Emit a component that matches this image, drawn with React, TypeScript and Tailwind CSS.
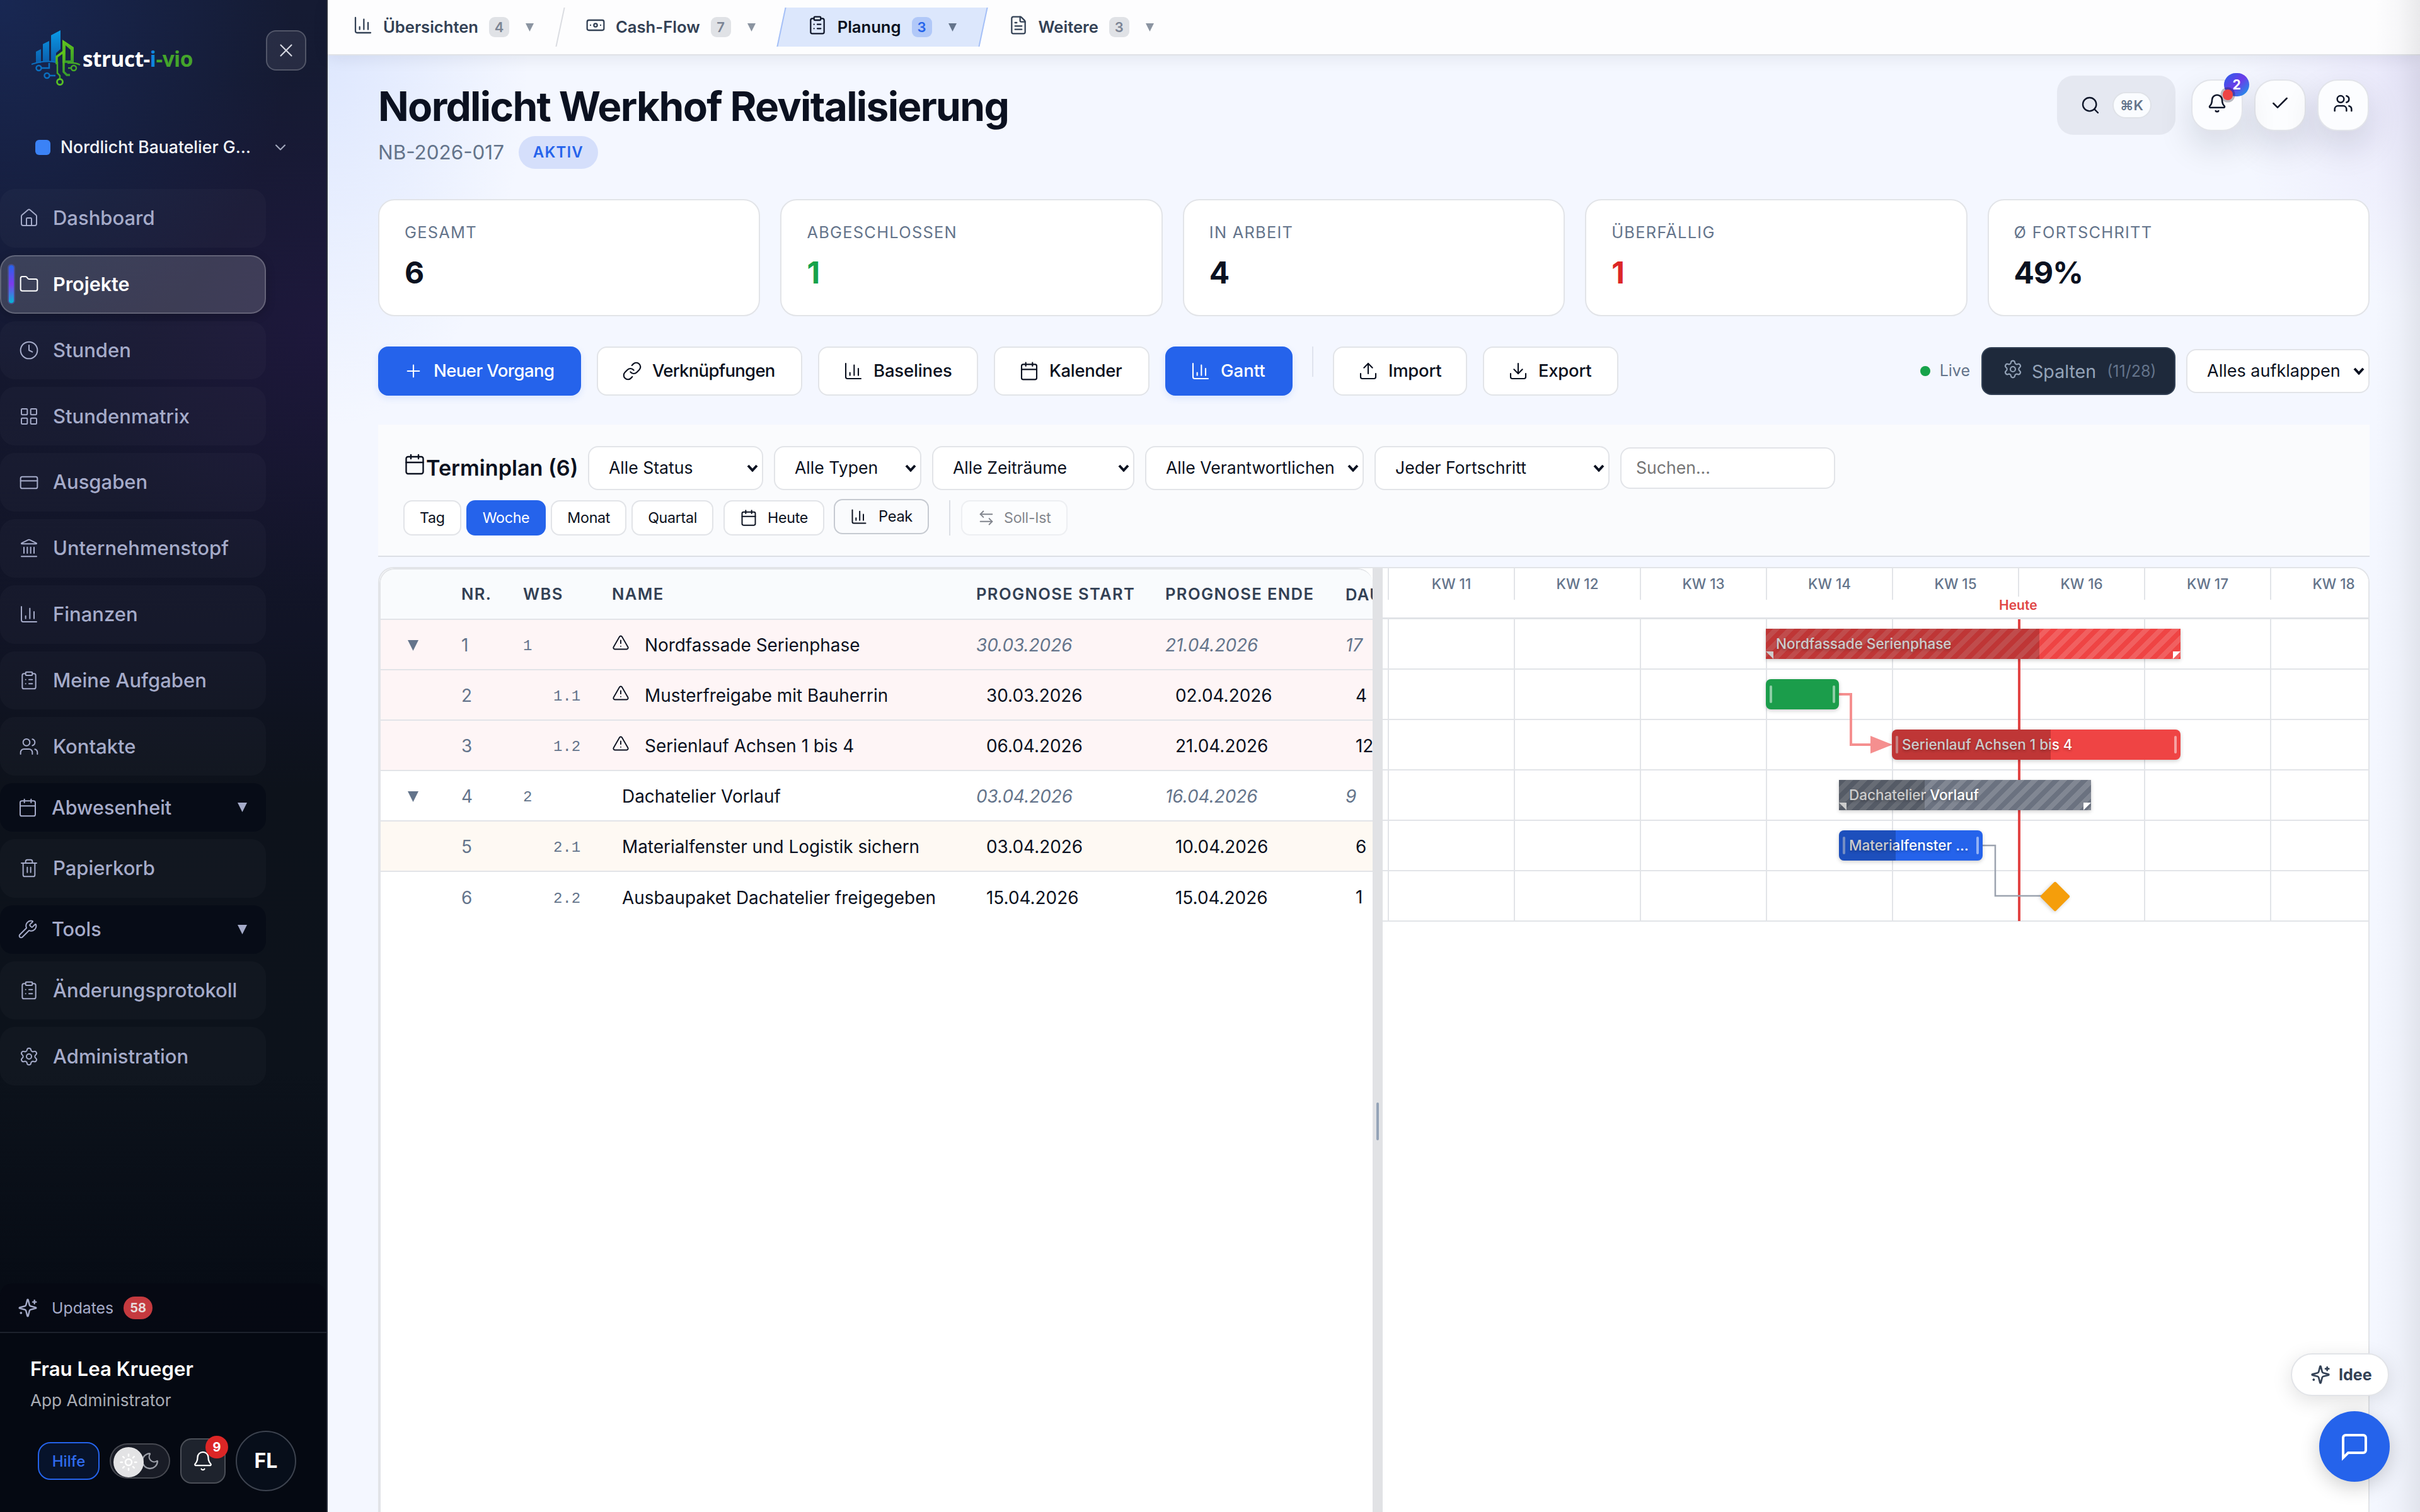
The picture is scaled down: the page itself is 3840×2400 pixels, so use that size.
import React from "react";
import {
  ArrowLeftRight,
  Banknote,
  Bell,
  Calendar,
  ChartColumn,
  Check,
  ChevronDown,
  ClipboardList,
  Clock,
  CreditCard,
  Download,
  FileText,
  Folder,
  House,
  Landmark,
  LayoutGrid,
  Link,
  Moon,
  Plus,
  Search,
  Settings,
  Sun,
  Trash2,
  TriangleAlert,
  Upload,
  Users,
  Wrench,
  X,
} from "lucide-react";

type IconType = React.ComponentType<{ size?: number; strokeWidth?: number; className?: string }>;

const NAV: { label: string; icon: IconType; active?: boolean; group?: boolean }[] = [
  { label: "Dashboard", icon: House },
  { label: "Projekte", icon: Folder, active: true },
  { label: "Stunden", icon: Clock },
  { label: "Stundenmatrix", icon: LayoutGrid },
  { label: "Ausgaben", icon: CreditCard },
  { label: "Unternehmenstopf", icon: Landmark },
  { label: "Finanzen", icon: ChartColumn },
  { label: "Meine Aufgaben", icon: ClipboardList },
  { label: "Kontakte", icon: Users },
  { label: "Abwesenheit", icon: Calendar, group: true },
  { label: "Papierkorb", icon: Trash2 },
  { label: "Tools", icon: Wrench, group: true },
  { label: "Änderungsprotokoll", icon: ClipboardList },
  { label: "Administration", icon: Settings },
];

const STATS = [
  { label: "GESAMT", value: "6", color: "text-[#0b1120]" },
  { label: "ABGESCHLOSSEN", value: "1", color: "text-[#16a34a]" },
  { label: "IN ARBEIT", value: "4", color: "text-[#0b1120]" },
  { label: "ÜBERFÄLLIG", value: "1", color: "text-[#dc2626]" },
  { label: "Ø FORTSCHRITT", value: "49%", color: "text-[#0b1120]" },
];

const ROWS = [
  { nr: 1, wbs: "1", name: "Nordfassade Serienphase", start: "30.03.2026", end: "21.04.2026", days: "17", parent: true, warn: true, bg: "bg-[#fef5f6]" },
  { nr: 2, wbs: "1.1", name: "Musterfreigabe mit Bauherrin", start: "30.03.2026", end: "02.04.2026", days: "4", warn: true, bg: "bg-[#fef5f6]" },
  { nr: 3, wbs: "1.2", name: "Serienlauf Achsen 1 bis 4", start: "06.04.2026", end: "21.04.2026", days: "12", warn: true, bg: "bg-[#fef5f6]" },
  { nr: 4, wbs: "2", name: "Dachatelier Vorlauf", start: "03.04.2026", end: "16.04.2026", days: "9", parent: true, bg: "bg-white" },
  { nr: 5, wbs: "2.1", name: "Materialfenster und Logistik sichern", start: "03.04.2026", end: "10.04.2026", days: "6", bg: "bg-[#fef9f3]" },
  { nr: 6, wbs: "2.2", name: "Ausbaupaket Dachatelier freigegeben", start: "15.04.2026", end: "15.04.2026", days: "1", bg: "bg-white" },
];

const WEEKS = ["KW 11", "KW 12", "KW 13", "KW 14", "KW 15", "KW 16", "KW 17", "KW 18"];

const Sparkle: React.FC<{ size: number; strokeWidth: number; className?: string }> = ({ size, strokeWidth, className }) => (
  <svg width={size} height={size} viewBox="0 0 24 24" fill="none" stroke="currentColor" strokeWidth={strokeWidth} strokeLinecap="round" strokeLinejoin="round" className={className}>
    <path d="M9.94 15.5A2 2 0 0 0 8.5 14.06l-6.14-1.58a.5.5 0 0 1 0-.96L8.5 9.94A2 2 0 0 0 9.94 8.5l1.58-6.14a.5.5 0 0 1 .96 0l1.58 6.14a2 2 0 0 0 1.44 1.44l6.14 1.58a.5.5 0 0 1 0 .96l-6.14 1.58a2 2 0 0 0-1.44 1.44l-1.58 6.14a.5.5 0 0 1-.96 0z" />
    <path d="M20 3v4M22 5h-4M4 17.5v1M4.5 18h-1" />
  </svg>
);

const Caret: React.FC<{ className?: string }> = ({ className }) => (
  <svg viewBox="0 0 14 14" className={className}>
    <path d="M0 0H14L7 14Z" fill="currentColor" />
  </svg>
);

const Logo: React.FC = () => (
  <svg width="78" height="90" viewBox="0 0 78 90" fill="none">
    <defs>
      <linearGradient id="lb" x1="0" y1="0" x2="0" y2="1">
        <stop offset="0" stopColor="#0a9be8" />
        <stop offset="1" stopColor="#0b5cab" />
      </linearGradient>
      <linearGradient id="lg" x1="0" y1="0" x2="0" y2="1">
        <stop offset="0" stopColor="#62c51c" />
        <stop offset="1" stopColor="#379a2c" />
      </linearGradient>
    </defs>
    <path d="M7 34l8-4v22H7zM18 22l10-5v33H18zM31 8l15-8v30l-7 6v14h-8z" fill="url(#lb)" />
    <path d="M0 54q22-7 39-3" stroke="#0b6fc0" strokeWidth="2" />
    <circle cx="11.500" cy="60" r="4" stroke="#0b6fc0" strokeWidth="2.500" />
    <circle cx="24.500" cy="72" r="4" stroke="#0b6fc0" strokeWidth="2.500" />
    <path d="M16 60h12V52M29 72h9" stroke="#0b6fc0" strokeWidth="2.500" />
    <path d="M49 15l18 12v25H49zM54 24v24h8V31z" fill="url(#lg)" fillRule="evenodd" />
    <path d="M40 54V42l11-8v32l5 5h5" stroke="url(#lg)" strokeWidth="3.500" />
    <path d="M41 50v18l4 4v6M57 52q12-1 20 3M58 60h4" stroke="#45a828" strokeWidth="2.500" />
    <circle cx="45" cy="82" r="4.500" stroke="#58c025" strokeWidth="2.800" />
    <circle cx="67" cy="60" r="4" stroke="#45a828" strokeWidth="2.500" />
  </svg>
);

const Sidebar: React.FC = () => (
  <aside className="relative flex h-[2400px] w-[520px] shrink-0 flex-col border-r-2 border-[#2a2f3b] bg-[radial-gradient(ellipse_620px_800px_at_0%_0%,rgba(29,58,130,0.4),transparent_75%),radial-gradient(ellipse_560px_560px_at_100%_22%,rgba(60,24,100,0.22),transparent_75%),linear-gradient(180deg,#151b33_0px,#151830_500px,#111426_1000px,#0d121b_1250px,#0c121b_1700px,#070c15_2040px,#050912_2400px)]">
    {/* HEADER */}
    <div className="mt-[48px] flex h-[64px] items-start pl-[50px] pr-[32px]">
      <div className="flex items-start gap-[3px]">
        <Logo />
        <div className="mt-[23px] font-['Open_Sans','Noto_Sans',sans-serif] text-[33.300px] font-bold leading-[44px] tracking-[-0.5px] text-white">
          struct-<span className="text-[#0f86dd]">i</span>
          <span className="text-[#44a52b]">-vio</span>
        </div>
      </div>
      <div className="ml-auto flex h-[64px] w-[64px] items-center justify-center rounded-[16px] border-2 border-white/20 bg-white/8 text-[#d6d9e2]">
        <X size={34} strokeWidth={1.5} />
      </div>
    </div>

    {/* WORKSPACE */}
    <div className="mt-[90px] flex h-[64px] items-center pl-[56px] pr-[59px] text-[#f3f5fa]">
      <span className="h-[24px] w-[24px] rounded-[6px] bg-[#3b82f6]" />
      <span className="ml-[16px] text-[26.600px] font-medium">Nordlicht Bauatelier G…</span>
      <ChevronDown size={28} strokeWidth={1.8} className="ml-auto text-[#a5abc0]" />
    </div>

    {/* NAV */}
    <nav className="mt-[34px] flex w-[422px] flex-col gap-[12px] text-[31px] font-medium text-[#a5abc9]">
      {NAV.map(({ label, icon: Icon, active, group }) =>
        group ? (
          <div key={label} className="flex h-[76.8px] items-center rounded-[20px] bg-[#060b17]/80 pl-[28px] pr-[30px]">
            <Icon size={32} strokeWidth={1.5} />
            <span className="ml-[22px] text-[30.600px]">{label}</span>
            <Caret className="ml-auto h-[15px] w-[15px]" />
          </div>
        ) : active ? (
          <div key={label} className="relative flex h-[92.8px] items-center rounded-[24px] border-2 border-white/20 bg-white/16 pl-[28px] text-white shadow-[0_4px_16px_rgba(0,0,0,0.2)]">
            <span className="absolute left-[12px] top-[14px] h-[60px] w-[8px] rounded-full bg-[linear-gradient(180deg,#2563eb,#7c3aed_50%,#06b6d4)] shadow-[0_0_0_2px_rgba(99,102,241,0.35)]" />
            <Icon size={32} strokeWidth={1.5} />
            <span className="ml-[22px] text-[30.500px] font-semibold">{label}</span>
          </div>
        ) : (
          <div key={label} className="flex h-[92.8px] items-center rounded-[24px] bg-white/[0.022] pl-[30px]">
            <Icon size={32} strokeWidth={1.5} />
            <span className="ml-[22px]">{label}</span>
          </div>
        )
      )}
    </nav>

    {/* FOOTER */}
    <div className="mt-auto flex h-[77px] items-center rounded-t-[20px] bg-[#060913]/70 pl-[28px] text-[24.800px] text-[#a5abc9]">
      <Sparkle size={32} strokeWidth={1.8} />
      <span className="ml-[22px] pt-[3px]">Updates</span>
      <span className="ml-[16px] flex h-[36px] w-[46px] items-center justify-center rounded-full bg-[#c53a3f] text-[20px] font-bold text-[#e8dada]">58</span>
    </div>
    <div className="h-[286px] border-t-2 border-[#1d222d] bg-[#050912] pl-[48px]">
      <div className="mt-[37px] text-[31.200px] font-semibold leading-[40px] text-white">Frau Lea Krueger</div>
      <div className="mt-[14px] text-[26.200px] leading-[32px] text-[#a9adb5]">App Administrator</div>
      <div className="mt-[32px] flex h-[96px] items-center pl-[12px]">
        <div className="flex h-[60px] w-[98px] items-center justify-center rounded-[20px] border-2 border-[#2563eb] bg-[#07132b] pt-[2px] text-[24px] font-medium text-[#2f6bee]">Hilfe</div>
        <div className="relative ml-[16px] flex h-[56px] w-[96px] items-center justify-end rounded-full border-2 border-white/20 bg-[#191c26] pr-[14px] text-[#9a9da6]">
          <span className="absolute left-[4px] top-[4px] flex h-[48px] w-[48px] items-center justify-center rounded-full bg-[#e3e3e5] text-white">
            <Sun size={30} strokeWidth={2} />
          </span>
          <Moon size={32} strokeWidth={1.7} />
        </div>
        <div className="relative ml-[16px] flex h-[72px] w-[72px] items-center justify-center rounded-[18px] border-2 border-white/20 bg-[#1e232d] text-white">
          <Bell size={34} strokeWidth={1.6} />
          <span className="absolute right-[-6px] top-[-6px] flex h-[36px] w-[36px] items-center justify-center rounded-full bg-[#dc2626] text-[20px] font-bold">9</span>
        </div>
        <div className="ml-[16px] flex h-[96px] w-[96px] items-center justify-center rounded-full border-2 border-[#3d434f] bg-[#070e1a] text-[32px] font-bold text-white">FL</div>
      </div>
    </div>
  </aside>
);

const Tab: React.FC<{ icon: IconType; label: string; count: number; active?: boolean; className?: string }> = ({ icon: Icon, label, count, active, className }) => (
  <div className={`relative flex h-[62px] items-center text-[25.600px] font-semibold text-[#334155] ${className}`}>
    {active && <span className="absolute inset-y-0 left-[-42px] right-[-43px] -skew-x-12 border-x-2 border-[#a5c0f7] bg-[#dce7fc]" />}
    <Icon size={32} strokeWidth={1.7} className={active ? "relative mb-[6px] text-[#0f172a]" : "relative mb-[6px]"} />
    <span className={active ? "relative ml-[16px] text-[#0b1120]" : "relative ml-[16px]"}>{label}</span>
    <span className={active ? "relative ml-[17px] flex h-[32px] w-[32px] items-center justify-center rounded-[9px] bg-[#b1c8f8] text-[22px] text-[#2563eb]" : "relative ml-[17px] flex h-[32px] w-[32px] items-center justify-center rounded-[9px] bg-[#e0e2e6] text-[22px] text-[#7b8494]"}>{count}</span>
    <Caret className={active ? "relative ml-[26px] h-[13px] w-[13px] text-[#64748b]" : "relative ml-[26px] h-[13px] w-[13px] text-[#8b94a1]"} />
  </div>
);

const TopBar: React.FC = () => (
  <div className="relative flex h-[88px] w-full items-start border-b-2 border-[#e0e2e7] bg-[#fdfdfe] pl-[40px] pt-[12px] shadow-[0_4px_24px_rgba(15,23,42,0.08)]">
    <Tab icon={ChartColumn} label="Übersichten" count={4} className="w-[290px]" />
    <span className="ml-[38px] h-[62px] w-[2px] -skew-x-12 bg-[#dadce1]" />
    <Tab icon={Banknote} label="Cash-Flow" count={7} className="ml-[39px]" />
    <Tab icon={ClipboardList} label="Planung" count={3} active className="ml-[82px]" />
    <Tab icon={FileText} label="Weitere" count={3} className="ml-[82px]" />
  </div>
);

const PageHeader: React.FC = () => (
  <div className="flex justify-between">
    <div>
      <h1 className="text-[64px] font-bold leading-[76px] tracking-[-0.0264em] text-[#0b1120]">Nordlicht Werkhof Revitalisierung</h1>
      <div className="mt-[9px] flex h-[52px] items-center">
        <span className="pt-[2px] text-[31.400px] text-[#64748b]">NB-2026-017</span>
        <span className="ml-[23px] flex h-[52px] w-[126px] items-center justify-center rounded-full bg-[#d5dffb] text-[24px] font-semibold tracking-[0.05em] text-[#2563eb]">AKTIV</span>
      </div>
    </div>
    <div className="flex items-start">
      <div className="mr-[25px] mt-[-11px] flex h-[94px] w-[188px] items-center justify-center gap-[19px] rounded-[26px] bg-[#e5e8f1] pr-[2px] text-[#0f172a]">
        <Search size={32} strokeWidth={1.8} />
        <span className="flex h-[42px] w-[62px] items-center justify-center rounded-full border-2 border-[#dfe2e8] bg-[#fafcff] text-[22px] font-semibold text-[#64748b]">⌘K</span>
      </div>
      <div className="mr-[1px] mt-[-5px] flex gap-[18px] text-[#0f172a]">
        <div className="relative flex h-[82px] w-[82px] items-center justify-center rounded-[32px] border-2 border-[#e2e4ea] bg-[#fcfdff] pb-[6px] shadow-[0_24px_56px_rgba(15,23,42,0.14)]">
          <Bell size={32} strokeWidth={1.9} />
          <span className="absolute right-[-12px] top-[-12px] flex h-[37px] w-[40px] items-center justify-center rounded-full bg-[linear-gradient(135deg,#2563eb,#6d3be8_50%,#0ea5e9)] text-[21px] font-bold text-white">2</span>
          <span className="absolute left-[48px] top-[14px] h-[17px] w-[16px] rounded-full bg-[#ef4444] shadow-[0_0_0_3.500px_rgba(15,15,30,0.28)]" />
        </div>
        <div className="flex h-[82px] w-[82px] items-center justify-center rounded-[32px] border-2 border-[#e2e4ea] bg-[#fcfdff] pb-[6px] shadow-[0_24px_56px_rgba(15,23,42,0.14)]">
          <Check size={32} strokeWidth={1.9} />
        </div>
        <div className="flex h-[82px] w-[82px] items-center justify-center rounded-[32px] border-2 border-[#e2e4ea] bg-[#fcfdff] pb-[6px] shadow-[0_24px_56px_rgba(15,23,42,0.14)]">
          <Users size={32} strokeWidth={1.9} />
        </div>
      </div>
    </div>
  </div>
);

const ActionButton: React.FC<{ icon: IconType; label: string; className: string; primary?: boolean }> = ({ icon: Icon, label, className, primary }) => (
  <div
    className={`flex h-[78px] items-center gap-[16px] whitespace-nowrap rounded-[16px] border-2 pl-[38px] font-medium ${className} ${
      primary ? "border-[#2563eb] bg-[#2563eb] text-white shadow-[0_4px_12px_rgba(37,99,235,0.12)]" : "border-[#e2e4e8] bg-white text-[#0b1120]"
    }`}
  >
    <Icon size={32} strokeWidth={1.6} className="shrink-0" />
    <span>{label}</span>
  </div>
);

const SelectArrow: React.FC = () => (
  <svg width="18" height="12" viewBox="0 0 18 12" fill="none" className="ml-auto shrink-0">
    <path d="M2 2l7 7.500L16 2" stroke="#0b1120" strokeWidth="4" />
  </svg>
);

const Select: React.FC<{ label: string; className: string }> = ({ label, className }) => (
  <div className={`flex h-[70px] items-center whitespace-nowrap rounded-[16px] border-2 border-[#e2e4e8] bg-white pl-[31px] pr-[6px] text-[#0b1120] ${className}`}>
    <span>{label}</span>
    <SelectArrow />
  </div>
);

const Toolbar: React.FC = () => (
  <div className="mt-[48px] flex h-[78px] items-center gap-[25px] text-[27.500px]">
    <ActionButton icon={Plus} label="Neuer Vorgang" className="w-[322px] tracking-[-0.02em]" primary />
    <ActionButton icon={Link} label="Verknüpfungen" className="w-[326px] tracking-[-0.026em]" />
    <ActionButton icon={ChartColumn} label="Baselines" className="w-[254px] tracking-[-0.006em]" />
    <ActionButton icon={Calendar} label="Kalender" className="w-[247px] tracking-[-0.012em]" />
    <ActionButton icon={ChartColumn} label="Gantt" className="w-[202px]" primary />
    <span className="mx-[6px] h-[48px] w-[2px] self-start bg-[#dfe3ee]" />
    <ActionButton icon={Upload} label="Import" className="w-[213px] tracking-[-0.01em]" />
    <ActionButton icon={Download} label="Export" className="w-[215px] tracking-[-0.01em]" />
    <div className="ml-auto flex items-center">
      <span className="h-[16px] w-[16px] rounded-full bg-[#16a34a]" />
      <span className="ml-[15px] text-[25px] text-[#64748b]">Live</span>
      <div className="ml-[18px] flex h-[76px] w-[308px] items-center rounded-[16px] border-2 border-[#334155] bg-[#1e293b] pl-[32px] text-[28.600px] text-[#94a3b8]">
        <Settings size={32} strokeWidth={1.6} className="mb-[6px]" />
        <span className="ml-[14px] pt-[2px]">Spalten</span>
        <span className="ml-[17px] pt-[2px] text-[25px] text-[#64748b]">(11/28)</span>
      </div>
      <Select label="Alles aufklappen" className="ml-[17px] w-[291px] text-[27px]" />
    </div>
  </div>
);

const chip = "flex h-[56px] items-center rounded-[14px] border-2 border-[#e2e4e8] bg-white px-[24px] text-[23.200px] tracking-[-0.012em] text-[#0b1120]";

const FilterPanel: React.FC = () => (
  <div className="mt-[46px] h-[210px] w-full border-b-2 border-[#dcdfe5] bg-[#fafbfd] px-[40px] pt-[34px]">
    <div className="flex h-[70px] items-center">
      <Calendar size={36} strokeWidth={1.6} className="mb-[12px] text-[#0b1120]" />
      <span className="w-[257px] text-[34.200px] font-semibold text-[#0b1120]">Terminplan (6)</span>
      <div className="flex items-center gap-[17px] text-[26.600px]">
        <Select label="Alle Status" className="w-[278px]" />
        <Select label="Alle Typen" className="w-[234px]" />
        <Select label="Alle Zeiträume" className="w-[321px]" />
        <Select label="Alle Verantwortlichen" className="w-[347px]" />
        <Select label="Jeder Fortschritt" className="w-[373px]" />
        <div className="flex h-[66px] w-[341px] items-center rounded-[16px] border-2 border-[#e2e4e8] bg-white pl-[23px] text-[#757575]">Suchen...</div>
      </div>
    </div>
    <div className="mt-[16px] flex h-[56px] items-center">
      <div className={chip}>Tag</div>
      <div className="ml-[8px] flex h-[56px] items-center rounded-[14px] bg-[#2563eb] px-[26px] text-[23.200px] tracking-[-0.012em] text-white">Woche</div>
      <div className={`ml-[8px] ${chip}`}>Monat</div>
      <div className={`ml-[8px] ${chip}`}>Quartal</div>
      <div className={`ml-[16px] gap-[16px] ${chip}`}>
        <Calendar size={28} strokeWidth={1.7} />
        Heute
      </div>
      <div className="mb-[4px] ml-[15px] flex h-[56px] items-center gap-[17px] rounded-[14px] border-2 border-[#c6cad1] bg-[#fafbfd] px-[24px] text-[23.600px] tracking-[-0.012em] text-[#0b1120]">
        <ChartColumn size={28} strokeWidth={1.7} />
        Peak
      </div>
      <span className="ml-[32px] h-[56px] w-[2px] bg-[#dcdfe5]" />
      <div className={`ml-[17px] gap-[14px] opacity-50 ${chip}`}>
        <ArrowLeftRight size={28} strokeWidth={1.7} />
        Soll-Ist
      </div>
    </div>
  </div>
);

const grid = "grid grid-cols-[128px_98px_141px_578px_300px_240px] items-center whitespace-nowrap";

const TaskTable: React.FC = () => (
  <div className="w-[1576px] shrink-0 overflow-hidden rounded-t-[24px] border-l-2 border-t-2 border-[#e2e4e8] bg-white">
    <div className={`${grid} h-[80px] border-b-2 border-[#e2e4e8] bg-[#f9fbfd] text-[25.600px] font-semibold tracking-[0.053em] text-[#334155]`}>
      <span />
      <span>NR.</span>
      <span>WBS</span>
      <span>NAME</span>
      <span>PROGNOSE START</span>
      <span>PROGNOSE ENDE</span>
    </div>
    {ROWS.map(row => (
      <div key={row.nr} className={`${grid} h-[80px] pt-[3px] text-[27.900px] text-[#0b1120] ${row.bg} ${row.nr < 6 ? "border-b-2 border-[#e2e4e8]" : ""}`}>
        <span className="pl-[43px] text-[#64748b]">{row.parent && <Caret className="h-[17px] w-[17px]" />}</span>
        <span className="text-[#64748b]">{row.nr}</span>
        <span className={row.parent ? "pt-[2px] font-['Liberation_Mono',monospace] text-[24px] text-[#64748b]" : "pl-[48px] pt-[2px] font-['Liberation_Mono',monospace] text-[24px] text-[#64748b]"}>{row.wbs}</span>
        <span className="flex items-center">
          {row.warn && <TriangleAlert size={28} strokeWidth={1.6} className="mb-[8px] mr-[8px]" />}
          <span className="pl-[16px]">{row.name}</span>
        </span>
        <span className={row.parent ? "italic text-[#64748b]" : "pl-[16px]"}>{row.start}</span>
        <span className={row.parent ? "italic text-[#64748b]" : "pl-[16px]"}>{row.end}</span>
      </div>
    ))}
  </div>
);

const DaysColumn: React.FC = () => (
  <div className="absolute left-[1533px] top-[2px] w-[43px] overflow-hidden whitespace-nowrap">
    <div className="flex h-[80px] items-center text-[25.600px] font-semibold tracking-[0.053em] text-[#334155]">DAUER</div>
    {ROWS.map(row => (
      <div key={row.nr} className={row.parent ? "flex h-[80px] items-center pt-[1px] text-[27.900px] italic text-[#64748b]" : "flex h-[80px] items-center pl-[16px] pt-[1px] text-[27.900px] text-[#0b1120]"}>{row.days}</div>
    ))}
  </div>
);

const Bar: React.FC<{ left: number; top: number; width: number; done: number; label?: string; tone: string; summary?: boolean }> = ({ left, top, width, done, label, tone, summary }) => (
  <div className={`absolute h-[48px] overflow-hidden shadow-[0_2px_6px_rgba(0,0,0,0.2)] ${summary ? "" : "rounded-[8px]"} ${tone}`} style={{ left, top, width }}>
    {summary ? (
      <>
        <span className="absolute inset-0 bg-[repeating-linear-gradient(135deg,transparent_0_8px,rgba(255,255,255,0.15)_8px_16px)]" />
        <span className="absolute bottom-0 left-0 h-[12px] w-[12px] bg-white [clip-path:polygon(0_0,100%_0,100%_100%)]" />
        <span className="absolute bottom-0 right-0 h-[12px] w-[12px] bg-white [clip-path:polygon(0_0,100%_0,0_100%)]" />
      </>
    ) : (
      <>
        <span className="absolute left-[6px] top-[10px] h-[28px] w-[4px] rounded-full bg-white/50" />
        <span className="absolute right-[6px] top-[10px] h-[28px] w-[4px] rounded-full bg-white/50" />
      </>
    )}
    {label && (
      <span className="absolute inset-y-0 left-[16px] right-[16px] flex items-center text-[22.500px] font-medium text-white [text-shadow:0_2px_4px_rgba(0,0,0,0.3)]">
        <span className="truncate">{label}</span>
      </span>
    )}
    <span className="absolute inset-y-0 left-0 bg-black/20" style={{ width: done }} />
  </div>
);

const Gantt: React.FC = () => (
  <div className="relative min-w-0 flex-1 overflow-hidden bg-white">
    {/* WEEK HEADER */}
    <div className="flex h-[81px] items-start border-b-[3px] border-[#e1e3e7]">
      <span className="h-[50px] w-[10px] shrink-0 border-r-2 border-[#e2e4e8]" />
      {WEEKS.map(week => (
        <span key={week} className="flex h-[50px] w-[200px] shrink-0 items-center justify-center border-r-2 border-[#e2e4e8] text-[22.400px] font-medium text-[#64748b]">
          {week}
        </span>
      ))}
    </div>
    <div className="relative">
      {/* GRID */}
      {ROWS.map(row => (
        <div key={row.nr} className="flex h-[80px] border-b-2 border-[#e2e4e8]">
          <span className="w-[10px] shrink-0 border-r-2 border-[#e2e4e8]" />
          {WEEKS.map(week => (
            <span key={week} className="w-[200px] shrink-0 border-r-2 border-[#e2e4e8]" />
          ))}
        </div>
      ))}

      {/* TODAY */}
      <span className="absolute left-[978px] top-[-36px] bg-white text-[21px] font-semibold leading-[28px] text-[#e04545]">Heute</span>
      <span className="absolute left-[1008px] top-0 h-[479px] w-[4px] bg-[#e24444]" />

      {/* DEPENDENCIES */}
      <svg width="1564" height="480" viewBox="0 0 1564 480" fill="none" className="absolute left-0 top-0">
        <path d="M724 119H743V199H776" stroke="#f58f8f" strokeWidth="4" />
        <path d="M774 185L809 199L774 213Z" fill="#f58f8f" />
        <path d="M952 359H972V439H1046" stroke="#9ca3af" strokeWidth="2.500" />
      </svg>

      <Bar left={608} top={15} width={658} done={434} label="Nordfassade Serienphase" tone="bg-[#ef4444]" summary />
      <Bar left={608} top={95} width={116} done={0} tone="bg-[#1b9d4b]" />
      <Bar left={808} top={175} width={458} done={252} label="Serienlauf Achsen 1 bis 4" tone="bg-[#ef4444]" />
      <Bar left={724} top={255} width={400} done={136} label="Dachatelier Vorlauf" tone="bg-[#6b7280]" summary />
      <Bar left={724} top={335} width={228} done={90} label="Materialfenster und Logistik sichern" tone="bg-[#2563eb]" />
      <span className="absolute left-[1050px] top-[423px] h-[34px] w-[34px] rotate-45 rounded-[2px] bg-[#f59e0b] shadow-[0_2px_6px_rgba(0,0,0,0.2)]" />
    </div>
  </div>
);

const App: React.FC = () => (
  <div className="relative flex h-[2400px] w-[3840px] overflow-hidden bg-[#f4f7ff] font-['Inter',sans-serif]">
    <Sidebar />
    <main className="relative flex min-w-0 flex-1 flex-col bg-[radial-gradient(ellipse_320px_620px_at_0px_60px,rgba(150,180,250,0.24),transparent),radial-gradient(ellipse_300px_360px_at_100%_120px,rgba(160,130,220,0.14),transparent)]">
      <TopBar />
      <div className="flex min-h-0 flex-1 flex-col pl-[80px] pr-[80px] pt-[43px]">
        <PageHeader />
        <div className="mt-[48px] grid grid-cols-5 gap-[32px]">
          {STATS.map(s => (
            <div key={s.label} className="h-[186px] rounded-[26px] border-2 border-[#e2e4e8] bg-white px-[40px] pt-[34px]">
              <div className="text-[25.400px] leading-[34px] tracking-[0.05em] text-[#64748b]">{s.label}</div>
              <div className={`mt-[17px] text-[48px] font-bold leading-[60px] tracking-[-0.02em] ${s.color}`}>{s.value}</div>
            </div>
          ))}
        </div>
        <Toolbar />
        <FilterPanel />

        {/* SPLIT VIEW */}
        <div className="relative mt-[16px] flex min-h-0 flex-1 overflow-hidden rounded-t-[24px] border-x-2 border-t-2 border-[#e2e4e8] bg-white">
          <TaskTable />
          <DaysColumn />
          <div className="flex w-[16px] shrink-0 justify-center bg-[#e1e2e5] pt-[848px]">
            <span className="h-[60px] w-[4px] rounded-full bg-[#94a3b8]" />
          </div>
          <Gantt />
        </div>
      </div>

      <span className="absolute inset-y-0 right-0 w-[70px] bg-[linear-gradient(90deg,transparent,rgba(60,60,80,0.03)_50%,rgba(60,60,70,0.1))]" />

      {/* FLOATING BUTTONS */}
      <div className="absolute bottom-[48px] right-[48px] flex flex-col items-end gap-[24px]">
        <div className="mr-[1px] flex h-[68px] w-[156px] items-center rounded-full border-2 border-[#e2e4e8] bg-white pl-[29px] text-[25px] font-bold text-[#334155] shadow-[0_8px_32px_rgba(0,0,0,0.12)]">
          <Sparkle size={32} strokeWidth={2} />
          <span className="ml-[13px] pt-[2px]">Idee</span>
        </div>
        <div className="flex h-[112px] w-[112px] items-center justify-center rounded-full bg-[#2563eb] text-white shadow-[0_8px_32px_rgba(0,0,0,0.2)]">
          <svg width="48" height="48" viewBox="0 0 24 24" fill="none" stroke="currentColor" strokeWidth="2">
            <path d="M21 15a2 2 0 0 1-2 2H7l-4 4V5a2 2 0 0 1 2-2h14a2 2 0 0 1 2 2z" />
          </svg>
        </div>
      </div>
    </main>
  </div>
);

export default App;
